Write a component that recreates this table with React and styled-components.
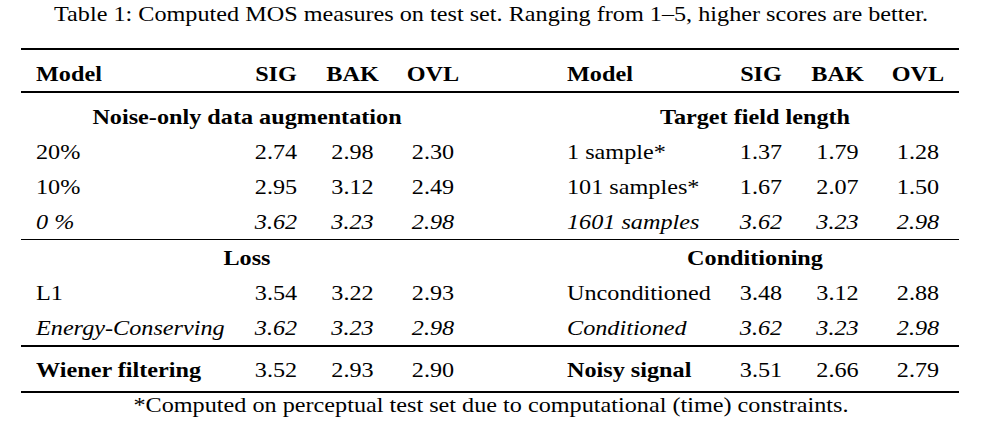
import React from "react";
import styled, { createGlobalStyle, css } from "styled-components";

const GlobalStyle = createGlobalStyle`
  body {
    margin: 0;
    background: #fff;
    color: #000;
    font-family: "Liberation Serif", "Times New Roman", serif;
  }
`;

// the scan of the table is a bit wider than Times, so stretch the glyphs
const stretch = css`
  transform: scaleX(1.1);
`;

const Page = styled.div`
  width: 982px;
  height: 429px;
  font-size: 22px;
  overflow: hidden;
`;

const Caption = styled.div`
  ${stretch};
  line-height: 27px;
  text-align: center;
  margin-bottom: 21px;
`;

const Table = styled.div`
  margin-left: 21px;
  width: 938px;
`;

const Rule = styled.div`
  height: ${props => (props.thin ? 1 : 2)}px;
  background: #000;
`;

const Row = styled.div`
  display: flex;
  justify-content: space-between;
  padding: 0 16px 0 15px;
  line-height: 35px;
  ${props =>
    props.head &&
    css`
      padding-top: 7px;
      line-height: 34px;
    `};
  ${props =>
    props.total &&
    css`
      padding-top: 5px;
      padding-bottom: 4px;
    `};
`;

const Half = styled.div`
  display: grid;
  grid-template-columns: ${props => props.model}px 42px 51px 50px;
  column-gap: 30px;
`;

const Cell = styled.div`
  ${stretch};
  white-space: nowrap;
  text-align: ${props => (props.num ? "center" : "left")};
  transform-origin: ${props => (props.num ? "center" : "left")} center;
  ${props =>
    props.bold &&
    css`
      font-weight: bold;
    `};
  ${props =>
    props.italic &&
    css`
      font-style: italic;
    `};
`;

const SectionTitle = styled.div`
  ${stretch};
  grid-column: 1 / -1;
  text-align: center;
  font-weight: bold;
`;

const Group = styled.div`
  padding-top: ${props => props.gap}px;
`;

const Footnote = styled.div`
  ${stretch};
  line-height: 24px;
  text-align: center;
`;

const LEFT_W = 189;
const RIGHT_W = 143;

const groups = [
  {
    gap: 6,
    left: {
      title: "Noise-only data augmentation",
      rows: [
        { name: "20%", v: ["2.74", "2.98", "2.30"] },
        { name: "10%", v: ["2.95", "3.12", "2.49"] },
        { name: "0 %", v: ["3.62", "3.23", "2.98"], italic: true }
      ]
    },
    right: {
      title: "Target field length",
      rows: [
        { name: "1 sample*", v: ["1.37", "1.79", "1.28"] },
        { name: "101 samples*", v: ["1.67", "2.07", "1.50"] },
        { name: "1601 samples", v: ["3.62", "3.23", "2.98"], italic: true }
      ]
    }
  },
  {
    gap: 0,
    left: {
      title: "Loss",
      rows: [
        { name: "L1", v: ["3.54", "3.22", "2.93"] },
        { name: "Energy-Conserving", v: ["3.62", "3.23", "2.98"], italic: true }
      ]
    },
    right: {
      title: "Conditioning",
      rows: [
        { name: "Unconditioned", v: ["3.48", "3.12", "2.88"] },
        { name: "Conditioned", v: ["3.62", "3.23", "2.98"], italic: true }
      ]
    }
  }
];

const DataCells = ({ row, bold }) => (
  <React.Fragment>
    <Cell bold={bold} italic={row.italic}>
      {row.name}
    </Cell>
    {row.v.map((val, i) => (
      <Cell key={i} num italic={row.italic}>
        {val}
      </Cell>
    ))}
  </React.Fragment>
);

const HeadCells = () => (
  <React.Fragment>
    <Cell bold>Model</Cell>
    <Cell num bold>SIG</Cell>
    <Cell num bold>BAK</Cell>
    <Cell num bold>OVL</Cell>
  </React.Fragment>
);

export default function App() {
  return (
    <Page>
      <GlobalStyle />
      <Caption>
        Table 1: Computed MOS measures on test set. Ranging from 1–5, higher
        scores are better.
      </Caption>
      <Table>
        <Rule />
        <Row head>
          <Half model={LEFT_W}>
            <HeadCells />
          </Half>
          <Half model={RIGHT_W}>
            <HeadCells />
          </Half>
        </Row>
        <Rule />
        {groups.map((g, gi) => (
          <React.Fragment key={gi}>
            <Group gap={g.gap}>
              <Row>
                <Half model={LEFT_W}>
                  <SectionTitle>{g.left.title}</SectionTitle>
                </Half>
                <Half model={RIGHT_W}>
                  <SectionTitle>{g.right.title}</SectionTitle>
                </Half>
              </Row>
              {g.left.rows.map((r, ri) => (
                <Row key={ri}>
                  <Half model={LEFT_W}>
                    <DataCells row={r} />
                  </Half>
                  <Half model={RIGHT_W}>
                    <DataCells row={g.right.rows[ri]} />
                  </Half>
                </Row>
              ))}
            </Group>
            <Rule thin={gi === 0} />
          </React.Fragment>
        ))}
        <Row total>
          <Half model={LEFT_W}>
            <DataCells bold row={{ name: "Wiener filtering", v: ["3.52", "2.93", "2.90"] }} />
          </Half>
          <Half model={RIGHT_W}>
            <DataCells bold row={{ name: "Noisy signal", v: ["3.51", "2.66", "2.79"] }} />
          </Half>
        </Row>
        <Rule />
      </Table>
      <Footnote>
        *Computed on perceptual test set due to computational (time) constraints.
      </Footnote>
    </Page>
  );
}
